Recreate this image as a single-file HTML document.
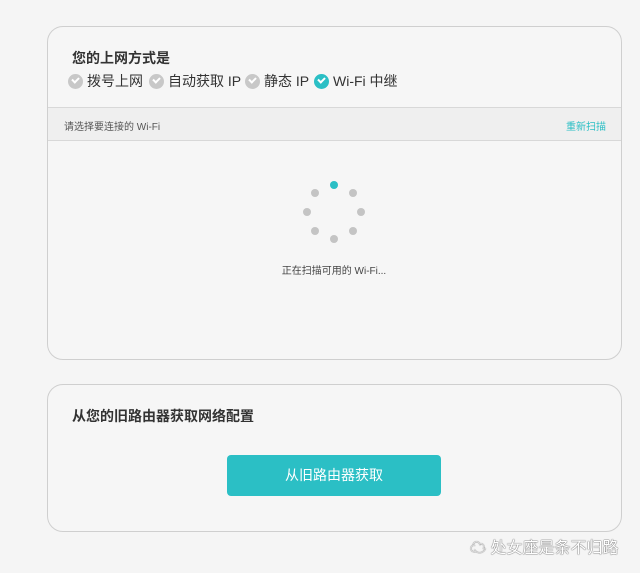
<!DOCTYPE html>
<html><head><meta charset="utf-8"><style>
body{margin:0;width:640px;height:573px;background:#f5f5f5;font-family:"Liberation Sans","Noto Sans CJK SC",sans-serif;position:relative;overflow:hidden}
.card{position:absolute;left:47px;width:575px;border:1px solid #cfcfcf;border-radius:16px;background:#f6f6f6;box-sizing:border-box}
.t{position:absolute;font-size:14px;font-weight:bold;color:#333}
.opt{position:absolute;top:71px;font-size:14px;color:#333;display:flex;align-items:center}
.ck{width:15px;height:15px;border-radius:50%;background:#c8c8c8;display:inline-block;margin-right:4px;position:relative}
.ck:after{content:"";position:absolute;left:4px;top:3px;width:5px;height:3px;border-left:2px solid #fff;border-bottom:2px solid #fff;transform:rotate(-45deg)}
.ck.on{background:#2bbfc5}
.dot{position:absolute;width:8px;height:8px;border-radius:50%;background:#c4c4c4}
</style></head><body>
<div class="card" style="top:26px;height:334px"></div>
<div class="t" style="left:72px;top:48px">您的上网方式是</div>
<div class="opt" style="left:68px"><span class="ck"></span>拨号上网</div>
<div class="opt" style="left:149px"><span class="ck"></span>自动获取 IP</div>
<div class="opt" style="left:245px"><span class="ck"></span>静态 IP</div>
<div class="opt" style="left:314px"><span class="ck on"></span>Wi-Fi 中继</div>
<div style="position:absolute;left:48px;top:107px;width:573px;height:32px;background:#efefef;border-top:1px solid #d8d8d8;border-bottom:1px solid #d8d8d8"></div>
<div style="position:absolute;left:64px;top:118px;font-size:10px;color:#555">请选择要连接的 Wi-Fi</div>
<div style="position:absolute;left:566px;top:118px;font-size:10px;color:#2bbfc5">重新扫描</div>
<div class="dot" style="left:330px;top:181px;background:#2bbfc5"></div>
<div class="dot" style="left:349px;top:189px"></div>
<div class="dot" style="left:357px;top:208px"></div>
<div class="dot" style="left:349px;top:227px"></div>
<div class="dot" style="left:330px;top:235px"></div>
<div class="dot" style="left:311px;top:227px"></div>
<div class="dot" style="left:303px;top:208px"></div>
<div class="dot" style="left:311px;top:189px"></div>
<div style="position:absolute;left:0;width:668px;text-align:center;top:262px;font-size:10px;color:#444">正在扫描可用的 Wi-Fi...</div>
<div class="card" style="top:384px;height:148px"></div>
<div class="t" style="left:72px;top:406px">从您的旧路由器获取网络配置</div>
<div style="position:absolute;left:227px;top:455px;width:214px;height:41px;background:#2bbfc5;border-radius:4px;color:#fff;font-size:14px;text-align:center;line-height:41px">从旧路由器获取</div>
<div style="position:absolute;left:470px;top:534px;font-size:16px;color:#fff;text-shadow:0 0 1px #555,0 0 1px #555">☁ 处女座是条不归路</div>
</body></html>
